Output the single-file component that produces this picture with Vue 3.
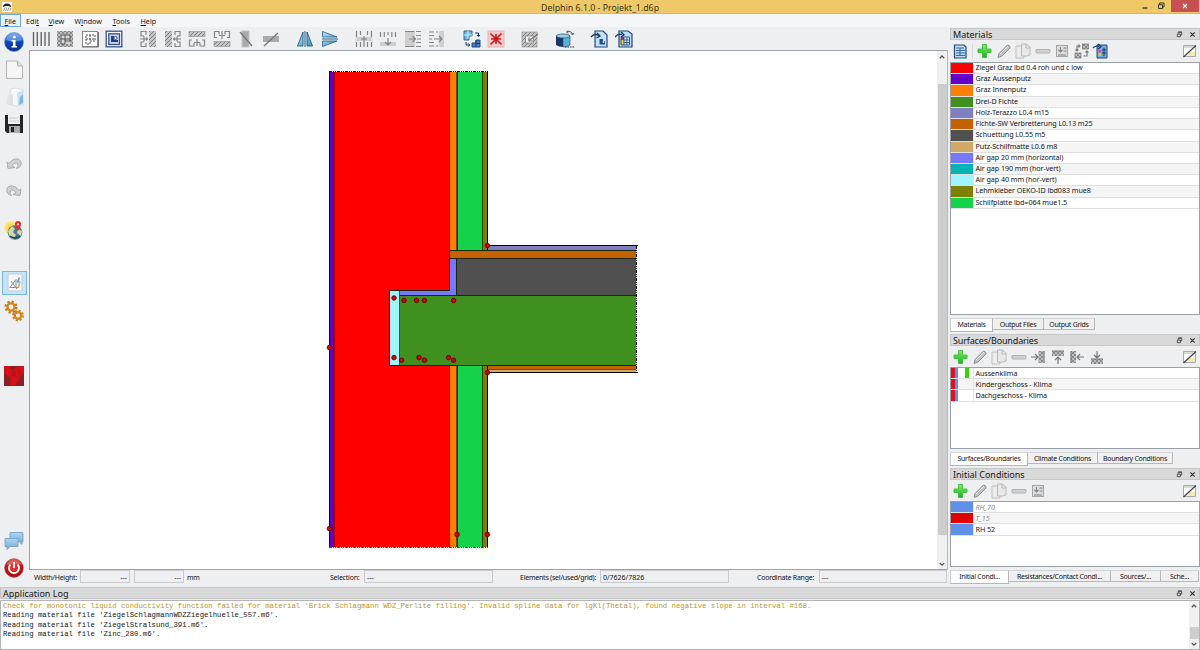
<script setup>
const menus = [
  ['F', 'ile'], ['Edi', 't'], ['V', 'iew'], ['Window', ''], ['T', 'ools'], ['H', 'elp'],
]
const menuClass = ['m-file', 'm-edit', 'm-view', 'm-window', 'm-tools', 'm-help']

const toolGroups = [
  ['lines', 'gridfull', 'gridpart', 'sketch'],
  ['insleft', 'insright', 'instop', 'insbottom', 'delcol', 'delrow'],
  ['mirrorh', 'mirrorv'],
  ['rowtop', 'rowbottom', 'coltop', 'colbottom'],
  ['replace', 'cross'],
  ['hatch'],
  ['cylinder'],
  ['exportpic', 'exporttable'],
]

const sideIcons = ['info', 'page', 'folder', 'disk', 'undo', 'redo', 'globe', 'editor', 'gears', 'geometry', 'chat', 'power']

const materials = [
  ['#ff0000', 'Ziegel Graz lbd 0.4 roh und c low'],
  ['#6400c8', 'Graz Aussenputz'],
  ['#ff8000', 'Graz Innenputz'],
  ['#409020', 'Drei-D Fichte'],
  ['#8080c0', 'Holz-Terazzo L0.4 m15'],
  ['#c46200', 'Fichte-SW Verbretterung L0.13 m25'],
  ['#505050', 'Schuettung L0.55 m5'],
  ['#d2aa68', 'Putz-Schilfmatte L0.6 m8'],
  ['#7878ff', 'Air gap 20 mm (horizontal)'],
  ['#00b4b4', 'Air gap 190 mm (hor-vert)'],
  ['#a0f4ff', 'Air gap 40 mm (hor-vert)'],
  ['#808000', 'Lehmkleber OEKO-ID lbd083 mue8'],
  ['#14d24a', 'Schilfplatte lbd=064 mue1.5'],
]
const surfaces = ['Aussenklima', 'Kindergeschoss - Klima', 'Dachgeschoss - Klima']
const initials = [
  ['#6090ea', 'RH_70', true],
  ['#e00000', 'T_15', true],
  ['#6090ea', 'RH 52', false],
]

const panels = [
  { id: 'mat', title: 'Materials', tools: ['plus', 'pencil', 'copy', 'minus', 'replacemat', 'swap', 'importmat'], tabs: ['Materials', 'Output Files', 'Output Grids'] },
  { id: 'sur', title: 'Surfaces/Boundaries', tools: ['plus', 'pencil', 'copy', 'minus', 'assignl', 'assignt', 'assignr', 'assignb'], tabs: ['Surfaces/Boundaries', 'Climate Conditions', 'Boundary Conditions'] },
  { id: 'ini', title: 'Initial Conditions', tools: ['plus', 'pencil', 'copy', 'minus', 'replacemat'], tabs: ['Initial Condi...', 'Resistances/Contact Condi...', 'Sources/...', 'Sche...'] },
]

const dots = [
  [487.4, 245.5], [394, 298], [404, 300.4], [416.5, 300.4], [424.4, 300.4], [453.6, 300.4],
  [394, 357.6], [401.6, 360.2], [419, 357.6], [424.4, 360.2], [448.6, 357.6], [453.6, 360.2],
  [487.4, 372.6], [329.4, 347.6], [329.4, 528.6], [457, 534.4], [487.4, 534.4],
]
</script>

<template>
  <div class="app">
    <svg class="defs" width="0" height="0">
      <defs>
        <pattern id="chk" width="4" height="4" patternUnits="userSpaceOnUse"><rect width="4" height="4" fill="#bdbdbd" /><path d="M0 0h2v2h-2zM2 2h2v2h-2z" fill="#8a8a8a" /></pattern>
        <pattern id="hat" width="4" height="4" patternUnits="userSpaceOnUse"><rect width="4" height="4" fill="#c4c4c4" /><path d="M-1 5L5-1M-1 1L1-1M3 5L5 3" stroke="#808080" stroke-width="1" /></pattern>
        <linearGradient id="blu" x1="0" y1="0" x2="0" y2="1"><stop offset="0" stop-color="#5b9cf5" /><stop offset=".5" stop-color="#0a46b8" /><stop offset="1" stop-color="#0b2f8e" /></linearGradient>
        <linearGradient id="sky" x1="0" y1="0" x2="1" y2="1"><stop offset="0" stop-color="#b7e4f7" /><stop offset="1" stop-color="#3c95c4" /></linearGradient>
        <linearGradient id="cha" x1="0" y1="0" x2="0" y2="1"><stop offset="0" stop-color="#b3d4f0" /><stop offset="1" stop-color="#6fa9d8" /></linearGradient>
        <linearGradient id="gre" x1="0" y1="0" x2="0" y2="1"><stop offset="0" stop-color="#7df06a" /><stop offset="1" stop-color="#0fb61c" /></linearGradient>
        <radialGradient id="pow" cx=".5" cy=".45" r=".5"><stop offset="0" stop-color="#f4403c" /><stop offset=".65" stop-color="#d81818" /><stop offset="1" stop-color="#a00c10" /></radialGradient>
        <radialGradient id="sun"><stop offset="0" stop-color="#f8cc28" /><stop offset=".65" stop-color="#fbdf6c" /><stop offset="1" stop-color="#fdf0b8" /></radialGradient>
      </defs>
      <symbol id="lines" viewBox="0 0 18 18"><path d="M1.500 2v14M5.300 2v14M9.200 2v14M13 2v14M17 2v14" stroke="#5c5c5c" stroke-width="1.300" /></symbol>
      <symbol id="gridfull" viewBox="0 0 18 18"><rect x="1" y="1" width="16" height="16" fill="url(#chk)" /><rect x="4.500" y="4.500" width="9.500" height="9.500" fill="#d8d8d8" /><path d="M5 14V5h9v6H9v3zM9 5v6M5 9h9" fill="none" stroke="#555" stroke-width="1" /></symbol>
      <symbol id="gridpart" viewBox="0 0 18 18"><rect x="1.500" y="1.500" width="15" height="15" fill="#fafafa" stroke="#888" /><path d="M1 17h16.500V2" fill="none" stroke="#777" /><path d="M5 14V5h9v6H9v3zM9 5v6M5 9h9" fill="none" stroke="#555" stroke-dasharray="2 1" /></symbol>
      <symbol id="sketch" viewBox="0 0 18 18"><rect x="1.200" y="1.200" width="15.600" height="15.600" fill="#fff" stroke="#35508e" stroke-width="1.300" /><rect x="3.800" y="3.800" width="10.700" height="10.700" fill="#c9d6ee" stroke="#35508e" stroke-width="1.300" /><path d="M6 6v6h7v-2H9V6z" fill="#243d7e" /><circle cx="10.500" cy="8" r="1.600" fill="#fff" stroke="#35508e" /></symbol>
      <symbol id="insright" viewBox="0 0 18 18"><rect x="1" y="1" width="7" height="16" fill="url(#hat)" /><path d="M11 5V1.500h5V6h-3M13 12h3v4.500h-5V13M9 9h8M13 6.500v5M11 7.500L9.500 9l1.500 1.500" fill="none" stroke="#858585" stroke-width="1.200" /></symbol>
      <symbol id="insleft" viewBox="0 0 18 18"><rect x="10" y="1" width="7" height="16" fill="url(#hat)" /><path d="M7 5V1.500H2V6h3M5 12H2v4.500h5V13M1 9h8M5 6.500v5M7 7.500L8.500 9 7 10.500" fill="none" stroke="#858585" stroke-width="1.200" /></symbol>
      <symbol id="instop" viewBox="0 0 18 18"><rect x="1" y="1.500" width="16" height="5" fill="url(#hat)" stroke="#999" stroke-width=".7" /><path d="M4 10H1.500v6H6v-3M12 13v3h4.500v-6H14M9 9v7M6 12.500h6" fill="none" stroke="#858585" stroke-width="1.200" /></symbol>
      <symbol id="insbottom" viewBox="0 0 18 18"><rect x="1" y="11.500" width="16" height="5" fill="url(#hat)" stroke="#999" stroke-width=".7" /><path d="M4 7.500H1.500v-6H6v3M12 4.500v-3h4.500v6H14M9 1v8M6 5.500h6" fill="none" stroke="#858585" stroke-width="1.200" /></symbol>
      <symbol id="delcol" viewBox="0 0 18 18"><rect x="5" y="1" width="7" height="16" fill="#ababab" stroke="#c5c5c5" /><path d="M3 2l12 14" stroke="#777" stroke-width="1.300" /></symbol>
      <symbol id="delrow" viewBox="0 0 18 18"><rect x="1" y="6" width="16" height="6" fill="#ababab" /><path d="M2 16L16 3" stroke="#777" stroke-width="1.300" /></symbol>
      <symbol id="mirrorh" viewBox="0 0 18 18"><path d="M7 2v14H1.500zM11 2v14h5.500z" fill="url(#sky)" stroke="#235b83" stroke-width=".9" /><path d="M9 1v16" stroke="#235b83" /></symbol>
      <symbol id="mirrorv" viewBox="0 0 18 18"><path d="M1.500 1.500L16 7H1.500zM1.500 11H16L1.500 16.500z" fill="url(#sky)" stroke="#235b83" stroke-width=".8" /><path d="M1 9h16" stroke="#235b83" /></symbol>
      <symbol id="rowtop" viewBox="0 0 18 18"><rect x="1" y="7" width="16" height="4" fill="#cfcfcf" /><path d="M1.500 1v6M5.500 1v4M12.500 1v4M16.500 1v6M1.500 12v5M5.500 12v5M9 12v5M12.500 12v5M16.500 12v5M6 9h6M9 6v6" stroke="#828282" stroke-width="1.200" /></symbol>
      <symbol id="rowbottom" viewBox="0 0 18 18"><rect x="1" y="12" width="16" height="4" fill="#cfcfcf" /><path d="M1.500 2v5M5.300 2v5M9 2v3M12.800 2v5M16.500 2v5M9 8v7M6 12l3 3 3-3" fill="none" stroke="#858585" stroke-width="1.200" /></symbol>
      <symbol id="coltop" viewBox="0 0 18 18"><path d="M1 1h10v16H1z" fill="#d0d0d0" /><path d="M1 1.500h9M12 1.500h5M12 5.500h5M13 9h4M12 12.500h5M1 16.500h9M12 16.500h5M5 9h6M8.500 6l3 3-3 3" fill="none" stroke="#858585" stroke-width="1.200" /></symbol>
      <symbol id="colbottom" viewBox="0 0 18 18"><rect x="11" y="1" width="5" height="16" fill="#d0d0d0" /><path d="M1 2h5M1 5.500h5M1 9h3M1 12.500h5M1 16h5M8 2h2M8 16h2M6 9h8M11 6l3 3-3 3" fill="none" stroke="#858585" stroke-width="1.200" /></symbol>
      <symbol id="replace" viewBox="0 0 18 18"><path d="M1 1h8v5H6v4H1z" fill="#6cbdec" stroke="#164d80" stroke-width=".8" /><path d="M5 1v8M1 5h8" stroke="#e2f3ff" stroke-width=".9" /><path d="M9 17h8v-7h-4v3H9z" fill="#4d83c4" stroke="#123a73" stroke-width=".9" /><path d="M12 3h3.500v3M14 5l1.500 1.700L17 5M3 12v3h3.500M5 13.300L6.700 15 5 16.700M13 13.500h4M13 10v7" fill="none" stroke="#123a73" stroke-width="1" /></symbol>
      <symbol id="cross" viewBox="0 0 18 18"><rect x="1" y="1" width="16" height="16" fill="#f6cccc" stroke="#d8a2a2" stroke-width=".7" /><path d="M3.500 3.500l11 11M14.500 3.500l-11 11M9 4v10M4 9h10" stroke="#cf1719" stroke-width="1.600" /></symbol>
      <symbol id="hatch" viewBox="0 0 18 18"><rect x="1" y="2" width="15" height="15" fill="url(#hat)" stroke="#999" stroke-width=".7" /><rect x="4.500" y="6" width="8" height="7" fill="#f2f2f2" stroke="#8a8a8a" stroke-width=".8" /><path d="M17 4l-9.500 7M8 7.500V11h4" fill="none" stroke="#777" stroke-width="1.200" /></symbol>
      <symbol id="cylinder" viewBox="0 0 18 18"><path d="M0 6v9q3 2 7 2V6z" fill="#183766" /><path d="M7 6h7v9q-3 2-7 2z" fill="#58b2d6" stroke="#21466f" stroke-width=".6" /><ellipse cx="7" cy="6" rx="6.800" ry="2" fill="#9ccfe2" stroke="#21466f" stroke-width=".7" /><path d="M11 2q4-1.500 5.500 2M15 3.500l1.500 1.500L18 3M12 .5L10.500 2 12 3.500" fill="none" stroke="#344b63" stroke-width="1" /><path d="M9 17h9" stroke="#222" stroke-dasharray="1.500 1" /></symbol>
      <symbol id="exportpic" viewBox="0 0 18 18"><path d="M5 1h8l4 4v12H5z" fill="#bfe2f6" stroke="#244879" stroke-width="1.200" /><path d="M1 7q3-4 8-1.500M7 3l3 3-3.500 2" fill="none" stroke="#1b3764" stroke-width="1.300" /><path d="M9.500 9v5.500H15V11h-2V9z" fill="#274d8c" /><circle cx="13.500" cy="12" r="1" fill="#bfe2f6" /></symbol>
      <symbol id="exporttable" viewBox="0 0 18 18"><path d="M4 1h9l4 3v13H4z" fill="#b9ddf2" stroke="#244879" stroke-width="1.200" /><rect x="6" y="7" width="8.500" height="8" fill="#f4fbff" /><rect x="6" y="10" width="3" height="5" fill="#f0d000" /><rect x="6" y="7" width="3" height="3" fill="#d819b2" /><path d="M6 7h8.500v8H6zM9 10h5M9 12.500h5M9 7v8M11.800 7v8" fill="none" stroke="#234982" stroke-width=".9" /><path d="M0 7q3-4 7-2.500M6 2l3 2.700L6 7" fill="none" stroke="#1b3764" stroke-width="1.300" /></symbol>

      <symbol id="info" viewBox="0 0 22 22"><circle cx="11" cy="11" r="9.500" fill="url(#blu)" stroke="#6f91c7" stroke-width=".7" /><path d="M3 9a8 7 0 0 1 16 0q-8 3-16 0" fill="#8ab8f5" opacity=".55" /><circle cx="11.300" cy="6" r="1.500" fill="#fff" /><path d="M8.500 9h4v6H14v1.500H8.500V15H10v-4.500H8.500z" fill="#fff" /></symbol>
      <symbol id="page" viewBox="0 0 22 22"><path d="M3.500 2h11l5 5v12.500h-16z" fill="#f6f6f6" stroke="#b4b4b4" /><path d="M14.500 2v5h5" fill="#dcdcdc" stroke="#b4b4b4" /></symbol>
      <symbol id="folder" viewBox="0 0 22 22"><path d="M8 3l5-1 7 2v15l-6 1-9-2z" fill="#f7f8f9" stroke="#cfd2d6" stroke-width=".7" /><path d="M14 7l6-3v14l-5 2z" fill="#c9e2f3" /><path d="M17 11l3-3v9l-4 2z" fill="#7dbbe4" /><path d="M5 9l5-1v11l-7-1z" fill="#dfe2e5" /></symbol>
      <symbol id="disk" viewBox="0 0 22 22"><path d="M2 2h18v18H4l-2-2z" fill="#252527" /><rect x="5" y="2" width="12" height="9" fill="#f2f2f2" /><path d="M6 5h10M6 8h10" stroke="#c8c8c8" /><rect x="6" y="13" width="11" height="7" fill="#a8abad" /><rect x="8" y="14" width="3" height="5" fill="#222" /></symbol>
      <symbol id="undo" viewBox="0 0 22 22"><path d="M4 10l2 1.500Q10 6 15 7q4 1.500 3 6-1 3-4.500 3.500 2.500-2.500 1-5Q12 9.500 9 14l3 1.500-7 1z" fill="#d0d2d4" stroke="#a5a5a5" stroke-width=".9" /></symbol>
      <symbol id="redo" viewBox="0 0 22 22"><path d="M18 10l-2 1.500Q12 6 7 7q-4 1.500-3 6 1 3 4.500 3.500-2.500-2.500-1-5Q10 9.500 13 14l-3 1.500 7 1z" fill="#d0d2d4" stroke="#a5a5a5" stroke-width=".9" /></symbol>
      <symbol id="globe" viewBox="0 0 22 22"><circle cx="8" cy="8" r="7.500" fill="url(#sun)" /><circle cx="12" cy="12.500" r="7.300" fill="#48779f" /><path d="M5 11l4-5 3 3-2 3 3 3-3 4q-4-2-5-8M15 9l4 2-1 5-4-3z" fill="#d5d99a" /><path d="M7 16q5 4 10 0" stroke="#17436c" stroke-width="1.600" fill="none" /><path d="M15 11Q12 6 12 4a3 3 0 0 1 6 0q0 2-3 7" fill="#ee2c24" /><circle cx="15" cy="4.300" r="1.100" fill="#fff" /></symbol>
      <symbol id="editor" viewBox="0 0 22 22"><path d="M4 2h14v17H4z" fill="#f6f7f8" stroke="#c4ccd2" /><path d="M6 15.500l6-8v8zM7 9l6 8M5.500 15.500h9" fill="none" stroke="#8b9297" stroke-width="1" /><path d="M13 9l2-4 1 1-2 6z" fill="#5c9ad6" /><path d="M14.500 16L16 9" stroke="#d6a545" stroke-width="1.300" /></symbol>
      <symbol id="gears" viewBox="0 0 22 22"><g fill="none" stroke="#c07a24"><circle cx="8" cy="7" r="5.200" stroke-width="2.600" stroke-dasharray="2.100 1.984" /><circle cx="15" cy="15.500" r="4.700" stroke-width="2.400" stroke-dasharray="1.900 1.791" /></g><g fill="none" stroke="#d98620" stroke-width="2.400"><circle cx="8" cy="7" r="3.600" /><circle cx="15" cy="15.500" r="3.300" /></g></symbol>
      <symbol id="geometry" viewBox="0 0 22 22"><path d="M1 1h20v20H1z" fill="#8b2025" /><path d="M1 1h5l3 4 5-3 7-1v7l-4 3-1 4-4 5-5 1 1-8-6-4z" fill="#d80f14" /><path d="M9 5l4 2v5l-5-2zM14 6l5 1-3 4z" fill="#b3161c" /></symbol>
      <symbol id="chat" viewBox="0 0 22 22"><path d="M7 2.500h13v9h-1v3l-3-3H7z" fill="url(#cha)" stroke="#6d9dc4" stroke-width=".8" /><path d="M2 8.500h13v8H7l-3 3v-3H2z" fill="url(#cha)" stroke="#6d9dc4" stroke-width=".8" /></symbol>
      <symbol id="power" viewBox="0 0 22 22"><circle cx="11" cy="11" r="9.300" fill="url(#pow)" stroke="#a6494b" stroke-width=".7" /><path d="M3 8q3-6 8-6t8 6q-8-3-16 0" fill="#fff" opacity=".3" /><path d="M7.500 7.500a5 5 0 1 0 7 0M11 5v6" fill="none" stroke="#fff" stroke-width="1.900" /></symbol>

      <symbol id="plus" viewBox="0 0 18 18"><path d="M7.500 2.500h4V7H16v3.500h-4.500V15.500h-4V10.500H3V7h4.500z" fill="url(#gre)" stroke="#35b52e" stroke-width=".8" /></symbol>
      <symbol id="pencil" viewBox="0 0 18 18"><path d="M3 15.500l1-4L12.500 3q3 .5 2.500 3L7 14z" fill="#c4c4c4" stroke="#8e8e8e" /><path d="M5 12l8-8" stroke="#eee" /></symbol>
      <symbol id="copy" viewBox="0 0 18 18"><path d="M2 4h5l3 2v10H2z" fill="#ededed" stroke="#c0c0c0" /><path d="M7.500 2h5l3.500 3v8l-3 1H7.500z" fill="#e9e9e9" stroke="#b8b8b8" /><path d="M12 2.500V6h3.500" fill="none" stroke="#b8b8b8" /></symbol>
      <symbol id="minus" viewBox="0 0 18 18"><rect x="2" y="7.500" width="14" height="3.500" rx=".5" fill="#d0d0d0" stroke="#a7a7a7" stroke-width=".8" /></symbol>
      <symbol id="replacemat" viewBox="0 0 18 18"><rect x="3.500" y="3.500" width="11" height="11" fill="#ddd" stroke="#a5a5a5" /><path d="M5 13h8M7.500 5v5M5.500 8l2 2 2-2M10.500 6h3M10.500 9h3" fill="none" stroke="#808080" stroke-width="1.100" /></symbol>
      <symbol id="swap" viewBox="0 0 18 18"><rect x="9.500" y="2" width="6" height="5" fill="url(#chk)" stroke="#777" stroke-width=".7" /><rect x="2" y="11" width="6" height="5" fill="url(#chk)" stroke="#777" stroke-width=".7" /><path d="M7 4H4v5M2.500 7.500L4 9l1.500-1.500M5.500 2.500L7 4 5.500 5.500M10.500 14H14V9M12.500 10.500L14 9l1.500 1.500" fill="none" stroke="#777" stroke-width="1.100" /></symbol>
      <symbol id="importmat" viewBox="0 0 18 18"><path d="M5 3h10v13H5z" fill="#75a9d5" stroke="#244879" /><path d="M1 6q3-3 6-1.500M6 2l3 2.700L6 7M12 6v8M10 8h4M10 11h4" fill="none" stroke="#1b3f76" stroke-width="1.200" /><path d="M6.500 8h2.500v2.500H6.500z" fill="#d44ca9" /><path d="M6.500 11h2.500v3H6.500z" fill="#e8c429" /></symbol>
      <symbol id="assignl" viewBox="0 0 18 18"><rect x="9.500" y="3" width="5" height="12" fill="url(#chk)" /><path d="M2 9h7M6 6l3 3-3 3M15 3v12" fill="none" stroke="#777" stroke-width="1.200" /></symbol>
      <symbol id="assignt" viewBox="0 0 18 18"><rect x="3" y="3" width="12" height="5" fill="url(#chk)" /><path d="M3 3h12M9 16V9M6 12l3-3 3 3" fill="none" stroke="#777" stroke-width="1.200" /></symbol>
      <symbol id="assignr" viewBox="0 0 18 18"><rect x="3" y="3" width="5" height="12" fill="url(#chk)" /><path d="M16 9H9M12 6L9 9l3 3M3 3v12" fill="none" stroke="#777" stroke-width="1.200" /></symbol>
      <symbol id="assignb" viewBox="0 0 18 18"><rect x="3" y="11" width="12" height="5" fill="url(#chk)" /><path d="M3 11h12M9 3v7M6 7l3 3 3-3" fill="none" stroke="#777" stroke-width="1.200" /></symbol>
      <symbol id="database" viewBox="0 0 18 18"><path d="M3.500 3h9.500l2 2v11H3.500z" fill="#c3dcf2" stroke="#244879" stroke-width="1.200" /><path d="M5 6h8M5 8.500h9M5 11h9M5 13.500h9M9 6v8" stroke="#3765a4" /></symbol>
      <symbol id="tint" viewBox="0 0 18 18"><path d="M3.500 3.500h12v11h-12z" fill="#fcfcfa" stroke="#a8a8a8" /><path d="M3 5h12.500" stroke="#b5b5b5" /><path d="M9.500 10H15v4H8z" fill="#f2ecb0" /><path d="M3.500 15L16 3.500" stroke="#343f52" stroke-width="1.200" /></symbol>
      <symbol id="float" viewBox="0 0 8 8"><path d="M2.500 3V1.500h4v3H5M1.500 3.500h3.500v3H1.500zM2.500 1h4" fill="none" stroke="#333" stroke-width=".9" /></symbol>
      <symbol id="close" viewBox="0 0 8 8"><path d="M1.500 1.500l5 5M6.500 1.500l-5 5" stroke="#333" stroke-width="1.300" /></symbol>
      <symbol id="up" viewBox="0 0 8 8"><path d="M1.800 5.200L4 3l2.200 2.200" fill="none" stroke="#555" stroke-width="1.300" /></symbol>
      <symbol id="down" viewBox="0 0 8 8"><path d="M1.800 3L4 5.200 6.200 3" fill="none" stroke="#555" stroke-width="1.300" /></symbol>
      <symbol id="logo" viewBox="0 0 10 10"><path d="M0 0h10v10H0z" fill="#fff" /><path d="M1 5q0-3.500 4-3.500T9 5Q5 3 1 5" fill="#222" /><path d="M3 5.500L1.500 9M5 5.500L3.500 9M7 5.500L5.500 9M9 6L8 8.500" stroke="#777" stroke-width=".8" /></symbol>
    </svg>

    <header class="titlebar">
      <svg class="logo"><use href="#logo" /></svg>
      <span class="title">Delphin 6.1.0 - Projekt_1.d6p</span>
      <div class="winbtns">
        <svg class="winmin" viewBox="0 0 10 10"><path d="M2.500 7h5" stroke="#222" stroke-width="1.200" /></svg>
        <svg class="winmax" viewBox="0 0 10 10"><path d="M3.500 3.500V2h4.500v4H7M2.500 3.800h4v3.700h-4z" fill="none" stroke="#222" stroke-width=".9" /></svg>
        <div class="winclose"><svg viewBox="0 0 8 8"><path d="M2 2l4 4M6 2L2 6" stroke="#fff" stroke-width="1.100" /></svg></div>
      </div>
    </header>

    <nav class="menubar">
      <span v-for="(m, i) in menus" :key="i" :class="['menu', menuClass[i]]">
        <template v-if="i === 1">Edi<u>t</u></template>
        <template v-else-if="i === 3">W<u>i</u>ndow</template>
        <template v-else><u>{{ m[0] }}</u>{{ m[1] }}</template>
      </span>
    </nav>

    <main class="main">
      <aside class="sidebar">
        <div v-for="s in sideIcons" :key="s" :class="['side', 's-' + s]"><svg><use :href="'#' + s" /></svg></div>
      </aside>

      <section class="center">
        <div class="toolbar">
          <div v-for="(g, i) in toolGroups" :key="i" class="group">
            <svg v-for="t in g" :key="t" class="tool"><use :href="'#' + t" /></svg>
          </div>
        </div>
        <div class="canvas">
          <svg class="drawing" viewBox="30 51 907 518">
            <g shape-rendering="crispEdges">
              <rect x="330" y="72" width="4" height="475" fill="#6400c8" />
              <rect x="334" y="72" width="115" height="475" fill="#ff0000" />
              <rect x="450" y="72" width="6" height="475" fill="#ff8000" />
              <rect x="458" y="72" width="24" height="475" fill="#14d24a" />
              <rect x="483" y="72" width="4" height="475" fill="#808000" />
              <rect x="333" y="72" width="1" height="475" fill="#380070" />
              <rect x="334" y="72" width="1" height="475" fill="#b00000" />
              <rect x="449" y="72" width="1" height="475" fill="#803000" />
              <rect x="456" y="72" width="1" height="475" fill="#804000" />
              <rect x="457" y="72" width="1" height="475" fill="#0a3c14" />
              <rect x="482" y="72" width="1" height="475" fill="#203c08" />
              <rect x="329" y="71" width="1" height="477" fill="#000" />
              <rect x="487" y="71" width="1" height="477" fill="#000" />
              <path d="M329 71.500h159" stroke="#000" stroke-dasharray="3 1 1 1 1 1" />
              <path d="M329 547.500h159" stroke="#555" stroke-dasharray="3 1 1 1 1 1" />
              <rect x="488" y="246" width="148" height="5" fill="#8080c0" />
              <rect x="449" y="251" width="187" height="8" fill="#c46200" />
              <rect x="457" y="259" width="179" height="36" fill="#505050" />
              <rect x="449" y="259" width="8" height="36" fill="#7878ff" />
              <rect x="399" y="290" width="58" height="6" fill="#7878ff" />
              <rect x="399" y="296" width="237" height="69" fill="#409020" />
              <rect x="389" y="290" width="10" height="75" fill="#a0f4ff" />
              <rect x="488" y="366" width="148" height="4" fill="#c46200" />
              <rect x="488" y="370" width="148" height="2" fill="#d2aa68" />
              <path d="M488 369.500h148" stroke="#7c4506" />
              <path d="M487 245.500h151M487 372.500h151" stroke="#000" />
              <path d="M449.500 250.500h187M449.500 258.500h187M449.500 250.500v40M456.500 259v37M389.500 290.500h60M389.500 290v75.500M399 295.500h237M389 365.500h247" fill="none" stroke="#1b2510" />
              <path d="M399.500 291v74" stroke="#2a5a50" />
              <path d="M636.500 246v127" stroke="#000" stroke-dasharray="3 1 1 1 1 1" />
            </g>
            <g v-for="(d, i) in dots" :key="i">
              <circle :cx="d[0]" :cy="d[1]" r="2.300" fill="#cf0000" stroke="#5c0000" stroke-width=".8" />
            </g>
          </svg>
          <div class="vscroll">
            <svg><use href="#up" /></svg><div class="thumb"></div><svg class="dn"><use href="#down" /></svg>
          </div>
        </div>
        <div class="status">
          <span class="st l1">Width/Height:</span><span class="field f1">---</span><span class="field f2">---</span><span class="st mm">mm</span>
          <span class="st l2">Selection:</span><span class="field f3">---</span>
          <span class="st l3">Elements (sel/used/grid):</span><span class="field f3">0/7626/7826</span>
          <span class="st l4">Coordinate Range:</span><span class="field f5">---</span>
        </div>
      </section>

      <aside class="right">
        <section v-for="p in panels" :key="p.id" :class="['panel', 'p-' + p.id]">
          <div class="phead"><span>{{ p.title }}</span><svg class="pf"><use href="#float" /></svg><svg class="pc"><use href="#close" /></svg></div>
          <div class="ptools">
            <template v-if="p.id === 'mat'"><svg><use href="#database" /></svg><i class="sep"></i></template>
            <svg v-for="t in p.tools" :key="t"><use :href="'#' + t" /></svg>
            <svg class="tint"><use href="#tint" /></svg>
          </div>
          <div class="list">
            <template v-if="p.id === 'mat'">
              <div v-for="m in materials" :key="m[1]" class="row"><b class="sw" :style="{ background: m[0] }"></b><span>{{ m[1] }}</span></div>
            </template>
            <template v-else-if="p.id === 'sur'">
              <div v-for="(m, i) in surfaces" :key="m" class="row"><b class="sw multi"><i class="c-red"></i><i class="c-blue"></i><i v-if="i === 0" class="c-green"></i></b><span>{{ m }}</span></div>
            </template>
            <template v-else>
              <div v-for="m in initials" :key="m[1]" class="row"><b class="sw" :style="{ background: m[0] }"></b><span :class="{ unused: m[2] }">{{ m[1] }}</span></div>
            </template>
          </div>
          <div class="tabs"><div v-for="(t, i) in p.tabs" :key="t" :class="['tab', 't' + i, { active: i === 0 }]">{{ t }}</div></div>
        </section>
      </aside>
    </main>

    <footer class="log">
      <div class="phead loghead"><span>Application Log</span><svg class="pf"><use href="#float" /></svg><svg class="pc"><use href="#close" /></svg></div>
      <div class="logbody">
        <div class="loglines">
          <p class="warn">Check for monotonic liquid conductivity function failed for material 'Brick Schlagmann WDZ_Perlite filling'. Invalid spline data for lgKl(Thetal), found negative slope in interval #168.</p>
          <p>Reading material file 'ZiegelSchlagmannWDZZiegelhuelle_557.m6'.</p>
          <p>Reading material file 'ZiegelStralsund_391.m6'.</p>
          <p>Reading material file 'Zinc_280.m6'.</p>
        </div>
        <div class="vscroll logscroll"><svg><use href="#up" /></svg><div class="thumb"></div><svg class="dn"><use href="#down" /></svg></div>
      </div>
    </footer>
  </div>
</template>

<style>
html, body { margin: 0; overflow: hidden; }
</style>

<style scoped>
* { box-sizing: border-box; }
.app { width: 1200px; height: 650px; display: flex; flex-direction: column; background: #eeeff1; font: 7.2px/10px "Noto Sans", "Open Sans", sans-serif; color: #151515; overflow: hidden; }
.defs { position: absolute; }
svg { display: block; flex: none; }
.titlebar { height: 14px; flex: none; background: #efc968; border-bottom: 1px solid #dbb75a; display: flex; align-items: center; }
.logo { width: 10px; height: 10px; margin-left: 2px; }
.title { margin-left: 529px; padding-top: 2px; font-size: 8.800px; color: #3e3417; white-space: nowrap; }
.winbtns { margin-left: auto; display: flex; height: 13px; }
.winmin, .winmax { width: 10px; height: 10px; margin-right: 6px; margin-top: 1px; }
.winmax { margin-right: 5px; }
.winclose { width: 28px; height: 12px; background: #c75050; margin-right: 1px; display: flex; justify-content: center; align-items: center; }
.winclose svg { width: 8px; height: 8px; }
.menubar { height: 13px; flex: none; background: #f5f6f7; display: flex; }
.menu { height: 13px; line-height: 14px; white-space: nowrap; }
.m-file { width: 21px; padding-left: 3.500px; border: 1px solid #70a7df; background: #e9f2fb; line-height: 12px; }
.m-edit { margin-left: 5px; width: 22.500px; }
.m-view { width: 26px; }
.m-window { width: 38px; letter-spacing: .05px; }
.m-tools { width: 28px; }
.main { height: 560px; flex: none; display: flex; }
.sidebar { width: 29px; display: flex; flex-direction: column; }
.side { width: 25px; height: 24px; margin-left: 1.500px; flex: none; display: flex; align-items: center; justify-content: center; }
.side svg { width: 22px; height: 22px; }
.s-info { margin-top: 3px; }
.s-page, .s-folder { margin-top: 3.500px; }
.s-disk { margin-top: 3px; }
.s-undo { margin-top: 15px; }
.s-redo { margin-top: 3px; }
.s-globe { margin-top: 17px; }
.s-editor { margin-top: 28px; margin-left: 2px; border: 1px solid #76b9e6; background: #c5e5fa; }
.s-gears { margin-top: 4px; }
.s-geometry { margin-top: 41px; }
.s-chat { margin-top: 141px; }
.s-power { margin-top: 3px; }
.center { width: 919px; display: flex; flex-direction: column; }
.toolbar { height: 23px; padding-left: 2.500px; display: flex; gap: 16.300px; align-items: center; }
.group { display: flex; gap: 6.500px; }
.tool { width: 18px; height: 18px; }
.canvas { height: 520px; flex: none; border: 1px solid #9da3ab; border-right-color: #b8bcc2; background: #fff; display: flex; }
.drawing { width: 907px; height: 518px; }
.vscroll { width: 10px; background: #f0f0f0; display: flex; flex-direction: column; align-items: center; }
.vscroll svg { width: 8px; height: 8px; margin-top: 2px; }
.vscroll .thumb { width: 9px; height: 451px; margin-top: 23px; background: #cdcdcd; }
.vscroll .dn { margin: auto 0 1px; }
.status { height: 17px; display: flex; align-items: flex-start; white-space: nowrap; font-size: 7px; letter-spacing: -.230px; }
.st, .field { flex: none; height: 13px; line-height: 13px; }
.st { padding-top: 1px; }
.field { border: 1px solid #c9cacd; padding: 0 2px; letter-spacing: 0; }
.l1 { width: 46px; margin-left: 5px; }
.f1 { width: 50px; text-align: right; margin-right: 3.500px; }
.f2 { width: 50.500px; text-align: right; }
.mm { margin-left: 3px; width: 143px; }
.l2 { width: 34px; }
.f3 { width: 129px; }
.l3 { width: 80px; margin-left: 27px; }
.l4 { width: 61.500px; margin-left: 28px; }
.f5 { width: 128px; }
.right { width: 250px; margin-left: 2px; padding-top: 1px; display: flex; flex-direction: column; }
.panel { flex: none; display: flex; flex-direction: column; }
.p-mat { height: 306px; }
.p-sur { height: 134px; }
.p-ini { height: 118px; }
.phead { height: 12px; flex: none; background: #d9d9d9; border: 1px solid #c6c6c6; display: flex; align-items: center; font-size: 9px; line-height: 11px; padding: 0 2px; }
.p-sur .phead span { letter-spacing: -.16px; }
.phead svg { width: 7px; height: 7px; }
.pf { margin-left: auto; }
.pc { margin: 0 1px 0 6px; }
.ptools { height: 22px; flex: none; display: flex; align-items: center; gap: 1.500px; padding: 0 2px 0 1px; }
.p-sur .ptools, .p-ini .ptools { height: 21px; }
.ptools svg { width: 18px; height: 18px; }
.ptools .tint { margin-left: auto; }
.sep { width: 1px; height: 15px; margin: 0 1px; background: #dcdcdc; }
.list { border: 1px solid #9ba0a7; background: #fff; }
.p-mat .list { height: 253px; }
.p-sur .list { height: 82px; }
.p-ini .list { height: 66px; }
.row { height: 11.230px; display: flex; border-bottom: 1px solid #dfdfdf; }
.row:nth-child(even) { background: #f5f5f5; }
.row span { line-height: 10px; margin-left: 1.500px; white-space: nowrap; letter-spacing: -.08px; }
.p-mat .row span { line-height: 8.500px; }
.p-sur .row span { line-height: 11.200px; }
.p-ini .row span { line-height: 10.600px; }
.sw { width: 23px; border-right: 1px solid #e2e2e2; display: flex; height: 10.200px; }
.multi i { width: 4px; background: #e0101c; }
.multi .c-blue { width: 3px; background: #6090ea; }
.multi .c-green { background: #30d800; margin-left: 7px; }
.unused { color: #8d8d8d; font-style: italic; }
.tabs { display: flex; padding-top: 3px; font-size: 7px; letter-spacing: -.28px; }
.tab { height: 12px; border: 1px solid #b5b7ba; border-left: none; border-top-color: #d4d5d7; text-align: center; line-height: 11px; white-space: nowrap; background: #f0f0f1; }
.tab.active { height: 14px; line-height: 12px; background: #fff; border-left: 1px solid #ccc; }
.p-mat .t0 { width: 43px; } .p-mat .t1 { width: 51px; } .p-mat .t2 { width: 51px; }
.p-sur .t0 { width: 78px; } .p-sur .t1 { width: 70px; } .p-sur .t2 { width: 75px; }
.p-ini .t0 { width: 59px; } .p-ini .t1 { width: 102px; } .p-ini .t2 { width: 50px; } .p-ini .t3 { width: 38px; }
.log { height: 63px; flex: none; }
.logbody { height: 50px; margin-top: 1px; border: 1px solid #b3b4b8; background: #fff; display: flex; }
.loglines { width: 1188px; padding: 1px 0 0 2px; font: 7.290px/9.400px "Liberation Mono", monospace; white-space: pre; }
.loglines p { margin: 0; }
.warn { color: #b8962c; }
.logscroll svg { margin-top: 1px; }
.logscroll .thumb { height: 12px; margin-top: 17px; }
</style>
